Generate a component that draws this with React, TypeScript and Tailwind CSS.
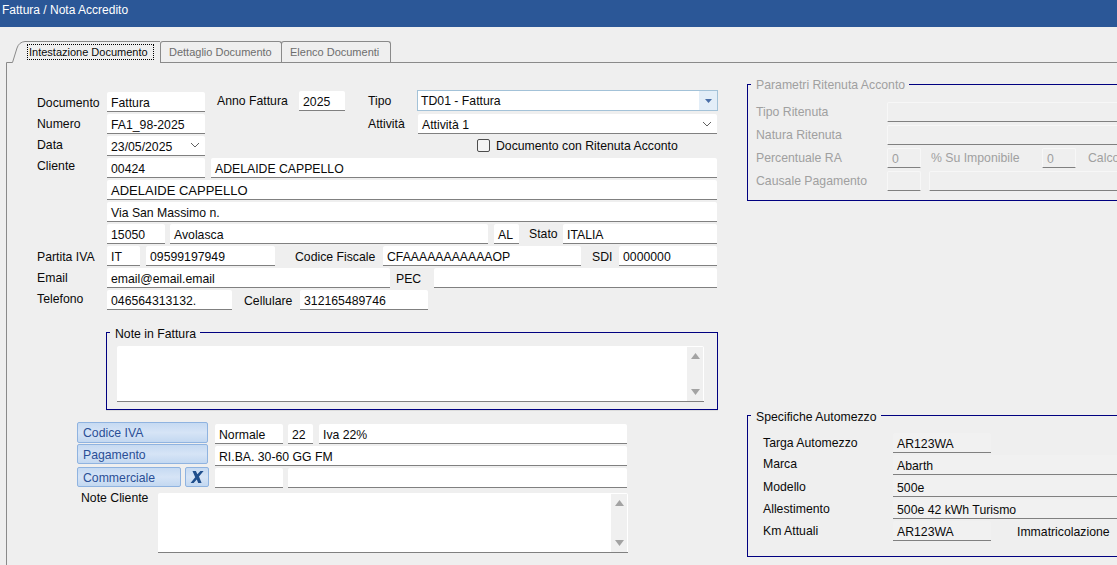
import type { ReactNode } from 'react';

interface FieldProps {
  className?: string;
  children?: ReactNode;
}

// white WinForms style text box with the grey bottom line
function Field({ className = '', children }: FieldProps) {
  return (
    <div className={`h-[20px] shrink-0 rounded-t-[2px] border-b border-[#808080] bg-white pl-[4px] pt-[4px] leading-[15px] whitespace-nowrap overflow-hidden ${className}`}>
      {children}
    </div>
  );
}

function ReadField({ className = '', children }: FieldProps) {
  return (
    <div className={`h-[20px] shrink-0 rounded-t-[2px] border-b border-[#808080] bg-[#f1f1f1] pl-[4px] pt-[4px] leading-[15px] whitespace-nowrap overflow-hidden ${className}`}>
      {children}
    </div>
  );
}

function OffField({ className = '', children }: FieldProps) {
  return (
    <div className={`h-[20px] shrink-0 rounded-t-[2px] border border-[#f7f7f7] border-b-[#808080] pl-[4px] pt-[3px] leading-[15px] text-[#a0a0a0] whitespace-nowrap overflow-hidden ${className}`}>
      {children}
    </div>
  );
}

function Label({ className = '', children }: FieldProps) {
  return <span className={`block h-[16px] shrink-0 pt-[1px] leading-[15px] whitespace-nowrap ${className}`}>{children}</span>;
}

function Chevron({ className = '' }: { className?: string }) {
  return (
    <svg width="10" height="6" viewBox="0 0 10 6" className={className}>
      <path d="M1 1l4 4 4-4" fill="none" stroke="#606060" strokeWidth="1" />
    </svg>
  );
}

function ScrollBar() {
  return (
    <div className="flex w-[16px] flex-col items-center justify-between bg-[#f0f0f0] py-[6px]">
      <svg width="9" height="6" viewBox="0 0 9 6">
        <path d="M4.5 0L9 6H0z" fill="#a3a3a3" />
      </svg>
      <svg width="9" height="6" viewBox="0 0 9 6">
        <path d="M0 0h9L4.5 6z" fill="#a3a3a3" />
      </svg>
    </div>
  );
}

function BlueButton({ className = '', children }: FieldProps) {
  return (
    <div className={`shrink-0 rounded-[2px] border border-[#8fb3e0] bg-gradient-to-b from-[#c6daf2] via-[#d6e4f6] to-[#c3d8f1] pl-[5px] pt-[3px] leading-[15px] text-[#2a4f96] whitespace-nowrap ${className}`}>
      {children}
    </div>
  );
}

export default function App() {
  return (
    <div className="flex h-[565px] w-[1117px] flex-col overflow-hidden bg-[#efefef] text-[12.25px] text-[#0a0a0a] [font-family:'Liberation_Sans',Arial,sans-serif]">
      <div className="h-[27px] shrink-0 bg-[#2b5797] pl-[2px] pt-[3px] text-[12px] leading-[15px] text-white">Fattura / Nota Accredito</div>

      {/* tabs */}
      <div className="ml-[6px] mt-[14px] flex h-[21px] shrink-0 items-start whitespace-nowrap text-[11px]">
        <div className="relative z-10 h-[22px] w-[154px] shrink-0">
          <svg width="155" height="23" viewBox="0 0 155 23" className="absolute left-0 top-0">
            <path d="M0 23V21H6L11 7Q13 1 19 .5H154V23z" fill="#efefef" />
            <path d="M.5 23V21.5H6.5L11 7Q13 1 19 .5H154" fill="none" stroke="#8a8a8a" strokeWidth="1" />
          </svg>
          <div className="relative ml-[21px] mt-[3px] h-[16px] w-[127px] border border-dotted border-black pl-[1px] leading-[14px]">Intestazione Documento</div>
        </div>
        <div className="h-[21px] w-[122px] shrink-0 rounded-t-[3px] border-x border-t border-[#8a8a8a] pl-[8px] pt-[3px] leading-[15px] text-[#6d6d6d]">Dettaglio Documento</div>
        <div className="-ml-px h-[21px] w-[110px] shrink-0 rounded-t-[3px] border-x border-t border-[#8a8a8a] pl-[8px] pt-[3px] leading-[15px] text-[#6d6d6d]">Elenco Documenti</div>
      </div>

      {/* panel */}
      <div className="ml-[6px] flex flex-1 border-l border-t border-[#8a8a8a]">
        <div className="w-[711px] shrink-0 pl-[30px] pt-[29px]">
          <div className="mb-[2px] flex h-[20px]">
            <Label className="mt-[3px] w-[70px]">Documento</Label>
            <Field className="w-[98px]">Fattura</Field>
            <Label className="ml-[12px] mt-[1px] w-[82px]">Anno Fattura</Label>
            <Field className="-mt-[1px] w-[46px]">2025</Field>
            <Label className="ml-[23px] mt-[1px] w-[49px]">Tipo</Label>
            <div className="-mt-[2px] flex h-[21px] w-[301px] shrink-0 border border-[#a3c2d8] bg-white">
              <span className="flex-1 pl-[3px] pt-[3px] leading-[15px]">TD01 - Fattura</span>
              <span className="flex w-[18px] items-center justify-center bg-[#e3eef8]">
                <svg width="7" height="4" viewBox="0 0 7 4">
                  <path d="M0 0h7L3.5 4z" fill="#4a6fa8" />
                </svg>
              </span>
            </div>
          </div>

          <div className="mb-[2px] flex h-[20px]">
            <Label className="mt-[2px] w-[70px]">Numero</Label>
            <Field className="w-[98px]">FA1_98-2025</Field>
            <Label className="ml-[163px] mt-[2px] w-[50px]">Attività</Label>
            <Field className="flex w-[299px] items-start justify-between pr-[5px]">
              <span>Attività 1</span>
              <Chevron className="mt-[3px]" />
            </Field>
          </div>

          <div className="mb-[2px] flex h-[20px]">
            <Label className="mt-[1px] w-[70px]">Data</Label>
            <Field className="flex w-[98px] items-start justify-between pr-[5px]">
              <span>23/05/2025</span>
              <Chevron className="mt-[2px]" />
            </Field>
            <div className="ml-[272px] mt-[3px] h-[13px] w-[13px] shrink-0 rounded-[2px] border border-[#4d4d4d] bg-[#f4f4f4]" />
            <Label className="ml-[6px] mt-[2px]">Documento con Ritenuta Acconto</Label>
          </div>

          <div className="mb-[2px] flex h-[20px]">
            <Label className="w-[70px]">Cliente</Label>
            <Field className="w-[98px]">00424</Field>
            <Field className="ml-[6px] w-[506px]">ADELAIDE CAPPELLO</Field>
          </div>

          <div className="mb-[2px] flex h-[20px] pl-[70px]">
            <Field className="w-[610px] !pt-[3px] text-[13px]">ADELAIDE CAPPELLO</Field>
          </div>

          <div className="mb-[2px] flex h-[20px] pl-[70px]">
            <Field className="w-[610px]">Via San Massimo n.</Field>
          </div>

          <div className="mb-[2px] flex h-[20px] pl-[70px]">
            <Field className="w-[58px]">15050</Field>
            <Field className="ml-[5px] w-[318px]">Avolasca</Field>
            <Field className="ml-[6px] w-[25px]">AL</Field>
            <Label className="ml-[10px] mt-[2px] w-[34px]">Stato</Label>
            <Field className="w-[154px]">ITALIA</Field>
          </div>

          <div className="mb-[2px] flex h-[20px]">
            <Label className="mt-[3px] w-[70px]">Partita IVA</Label>
            <Field className="w-[33px]">IT</Field>
            <Field className="ml-[6px] w-[129px]">09599197949</Field>
            <Label className="ml-[20px] mt-[3px] w-[88px]">Codice Fiscale</Label>
            <Field className="w-[198px]">CFAAAAAAAAAAAOP</Field>
            <Label className="ml-[11px] mt-[3px] w-[27px]">SDI</Label>
            <Field className="w-[98px]">0000000</Field>
          </div>

          <div className="mb-[2px] flex h-[20px]">
            <Label className="mt-[2px] w-[70px]">Email</Label>
            <Field className="w-[283px]">email@email.email</Field>
            <Label className="ml-[6px] mt-[3px] w-[38px]">PEC</Label>
            <Field className="w-[283px]" />
          </div>

          <div className="mb-[2px] flex h-[20px]">
            <Label className="mt-[1px] w-[70px]">Telefono</Label>
            <Field className="w-[125px]">046564313132.</Field>
            <Label className="ml-[12px] mt-[3px] w-[56px]">Cellulare</Label>
            <Field className="w-[128px]">312165489746</Field>
          </div>

          {/* note in fattura */}
          <div className="relative ml-[69px] mt-[22px] h-[78px] w-[612px] border border-[#000080] pl-[10px] pt-[13px] shadow-[0_1px_0_#dcdcdc]">
            <Label className="absolute left-[3px] top-[-7px] bg-[#efefef] pl-[5px] pr-[4px]">Note in Fattura</Label>
            <div className="flex h-[56px] w-[587px] justify-end rounded-t-[2px] border-b border-[#808080] bg-white pr-[1px] pt-[1px]">
              <ScrollBar />
            </div>
          </div>

          {/* iva, pagamento */}
          <div className="ml-[40px] mt-[12px] flex h-[22px]">
            <BlueButton className="h-[21px] w-[131px]">Codice IVA</BlueButton>
            <Field className="ml-[7px] mt-[2px] w-[68px]">Normale</Field>
            <Field className="ml-[5px] mt-[2px] w-[25px]">22</Field>
            <Field className="ml-[6px] mt-[2px] w-[308px]">Iva 22%</Field>
          </div>
          <div className="ml-[40px] flex h-[22px]">
            <BlueButton className="h-[20px] w-[131px]">Pagamento</BlueButton>
            <Field className="ml-[7px] mt-[2px] w-[412px]">RI.BA. 30-60 GG FM</Field>
          </div>
          <div className="ml-[40px] flex h-[22px]">
            <BlueButton className="mt-[1px] h-[20px] w-[104px]">Commerciale</BlueButton>
            <BlueButton className="ml-[4px] mt-[1px] flex h-[20px] w-[24px] items-center justify-center !pl-0 !pt-0">
              <svg width="15" height="14" viewBox="0 0 15 14">
                <path d="M2.5 1h3.4l1.5 3.2L10.4 1h3.2L9 6.6 11.6 13H8.2L6.8 9.4 3.6 13H.6L5.2 7.2z" fill="#1f4e8c" />
              </svg>
            </BlueButton>
            <Field className="ml-[6px] mt-[2px] w-[68px]" />
            <Field className="ml-[5px] mt-[2px] w-[339px]" />
          </div>
          <div className="ml-[44px] mt-[5px] flex h-[60px]">
            <Label className="-mt-[3px] w-[77px]">Note Cliente</Label>
            <div className="flex h-[60px] w-[470px] shrink-0 justify-end rounded-t-[2px] border-b border-[#808080] bg-white pr-[1px] pt-[1px]">
              <ScrollBar />
            </div>
          </div>
        </div>

        {/* right column */}
        <div className="ml-[29px] shrink-0 pt-[21px]">
          <div className="relative h-[117px] w-[500px] border border-[#000080] pl-[8px] pt-[17px] text-[#a0a0a0]">
            <Label className="absolute left-[3px] top-[-8px] bg-[#efefef] pl-[5px] pr-[4px]">Parametri Ritenuta Acconto</Label>
            <div className="mb-[3px] flex h-[20px]">
              <Label className="mt-[2px] w-[131px]">Tipo Ritenuta</Label>
              <OffField className="w-[400px]" />
            </div>
            <div className="mb-[3px] flex h-[20px]">
              <Label className="mt-[2px] w-[131px]">Natura Ritenuta</Label>
              <OffField className="w-[400px]" />
            </div>
            <div className="mb-[3px] flex h-[20px]">
              <Label className="mt-[2px] w-[131px]">Percentuale RA</Label>
              <OffField className="w-[34px]">0</OffField>
              <Label className="ml-[10px] mt-[2px] w-[111px]">% Su Imponibile</Label>
              <OffField className="w-[34px]">0</OffField>
              <Label className="ml-[12px] mt-[2px]">Calco</Label>
            </div>
            <div className="flex h-[20px]">
              <Label className="mt-[2px] w-[131px]">Causale Pagamento</Label>
              <OffField className="w-[34px]" />
              <OffField className="ml-[8px] w-[300px]" />
            </div>
          </div>

          <div className="relative mt-[214px] h-[142px] w-[500px] border border-[#000080] pl-[15px] pt-[17px]">
            <Label className="absolute left-[3px] top-[-7px] bg-[#efefef] pl-[5px] pr-[4px]">Specifiche Automezzo</Label>
            <div className="mb-[2px] flex h-[20px]">
              <Label className="mt-[2px] w-[130px]">Targa Automezzo</Label>
              <ReadField className="w-[98px]">AR123WA</ReadField>
            </div>
            <div className="mb-[2px] flex h-[20px]">
              <Label className="mt-[1px] w-[130px]">Marca</Label>
              <ReadField className="w-[300px]">Abarth</ReadField>
            </div>
            <div className="mb-[2px] flex h-[20px]">
              <Label className="mt-[2px] w-[130px]">Modello</Label>
              <ReadField className="w-[300px]">500e</ReadField>
            </div>
            <div className="mb-[2px] flex h-[20px]">
              <Label className="mt-[2px] w-[130px]">Allestimento</Label>
              <ReadField className="w-[300px]">500e 42 kWh Turismo</ReadField>
            </div>
            <div className="flex h-[20px]">
              <Label className="mt-[2px] w-[130px]">Km Attuali</Label>
              <ReadField className="w-[98px]">AR123WA</ReadField>
              <Label className="ml-[26px] mt-[3px]">Immatricolazione</Label>
            </div>
          </div>
        </div>
      </div>
    </div>
  );
}
